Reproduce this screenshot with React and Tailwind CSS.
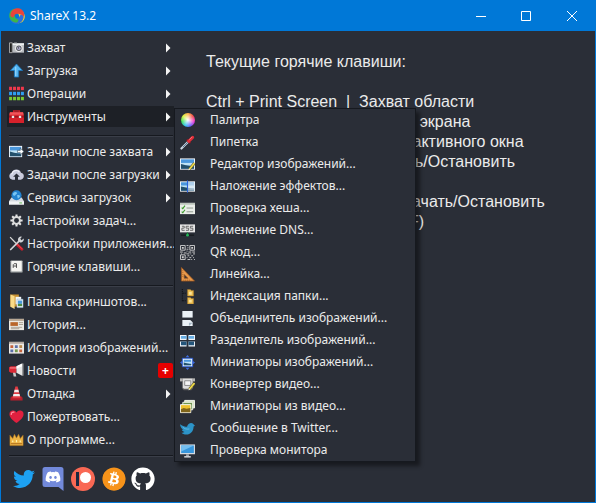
import React from "react";
import { FaTwitter, FaDiscord, FaBitcoin, FaGithub } from "react-icons/fa";

// 16x16 icon canvas shared by all menu icons
const Icon = ({ children }) => (
  <svg
    viewBox="0 0 16 16"
    className="h-[15px] w-[15px] shrink-0"
    fill="none"
    aria-hidden="true">
    {children}
  </svg>
);

// Small landscape picture reused in several icons
const Photo = ({ x = 0, y = 0, w = 16, h = 11 }) => (
  <g>
    <rect x={x} y={y} width={w} height={h} fill="#f4f8fb" />
    <rect x={x + 1} y={y + 1} width={w - 2} height={h - 2} fill="#4a97dc" />
    <path
      d={`M${x + 1} ${y + h * 0.4}h${w - 2}v${h * 0.25}h-${w - 2}z`}
      fill="#bfe3f5"
    />
    <path
      d={`M${x + 1} ${y + h * 0.5}L${x + w * 0.4} ${y + h * 0.6}L${x + w - 1} ${
        y + h * 0.72
      }V${y + h - 1}H${x + 1}z`}
      fill="#23506b"
    />
  </g>
);

const Pencil = () => (
  <g>
    <path d="M15.5 6.5L10 13" stroke="#5c5424" strokeWidth="3" />
    <path d="M15.5 6.5L10 13" stroke="#f0dc4c" strokeWidth="1.8" />
    <path d="M9 14.2l.6-2 1.4 1.2z" fill="#f5f5e8" />
  </g>
);

const CameraIcon = () => (
  <Icon>
    <path d="M.5 3h3v10.500h-3z" fill="#222" stroke="#c8c8c8" strokeWidth=".8" />
    <path d="M4 3.500h12v10H4z" fill="#b9bcc0" />
    <path d="M4 3.500h12v2H4z" fill="#eceef0" />
    <path d="M5.500 2.500h3v1h-3z" fill="#85888c" />
    <circle cx="10.5" cy="8.7" r="4" fill="#ececee" />
    <circle cx="10.5" cy="8.7" r="2.9" fill="#55595f" />
    <circle cx="10.5" cy="8.7" r="1.9" fill="#b4b1d2" />
    <circle cx="10.2" cy="8.4" r=".7" fill="#333" />
  </Icon>
);

const UploadIcon = () => (
  <Icon>
    <path
      d="M8 1L14.5 8H10.3v7H5.700V8H1.500z"
      fill="#51b3f0"
      stroke="#1976bd"
      strokeWidth=".8"
    />
    <path d="M7.2 4v10" stroke="#a4dcff" strokeWidth="1" />
  </Icon>
);

const GridIcon = () => (
  <Icon>
    {[
      [0.8, "#f0384c"],
      [6.2, "#2f9df0"],
      [11.6, "#78c832"],
    ].map(([y, color]) =>
      [0.1, 4.3, 8.5, 12.7].map((x) => (
        <rect key={`${x}-${y}`} x={x} y={y} width="3.200" height="3.600" fill={color} />
      ))
    )}
  </Icon>
);

const ToolboxIcon = () => (
  <Icon>
    <path d="M5 4V2h6v2" stroke="#c81e28" strokeWidth="1.6" />
    <path d="M1 3.500h14L16 8v7H0V8z" fill="#d6212b" />
    <path d="M1 3.500h14l.6 2.500H.4z" fill="#f2545a" />
    <path d="M0 8.4h16" stroke="#771018" />
    <path d="M3 7.3h2.500v2.4H3zM10.5 7.3H13v2.4h-2.500z" fill="#e8e8e8" />
  </Icon>
);

const AfterCaptureIcon = () => (
  <Icon>
    <Photo y={2} w={14} h={12} />
    <path
      d="M9 6.800h3V4.5L16 8l-4 3.5V9.2H9z"
      fill="#fff"
      stroke="#274254"
      strokeWidth=".6"
    />
  </Icon>
);

const CloudIcon = () => (
  <Icon>
    <path
      d="M3.800 13.5a3.800 3.800 0 01-.8-7.400A5.200 5.200 0 0112.8 6a3.8 3.8 0 01-.4 7.500z"
      fill="#c9cbdd"
    />
    <path d="M3 8a4.500 4.500 0 018-2.500" stroke="#f1f1f8" strokeWidth="1.2" />
    <path d="M8 6.8l3.600 3.700H9.6V14H6.4v-3.500h-2z" fill="#292c36" />
  </Icon>
);

const DriveGlobeIcon = () => (
  <Icon>
    <path d="M2.5 8h11l2.500 4v3.500H0V12z" fill="#d5dae1" />
    <path d="M0 12.2h16v3.300H0z" fill="#f1f3f6" />
    <path d="M11 13.8h3" stroke="#58b04a" />
    <circle cx="8" cy="5.6" r="5.400" fill="#2382cf" />
    <path
      d="M4.2 3.6c2-2 3.8-1.6 4.3-.6s-1 1.6-1.8 2.6-2 .6-2.5-.2zM8.6 5.5c1.6-.4 3 .2 3.2 1.2-.6 1.4-1.6 2-2.4 2.4z"
      fill="#78c4f2"
    />
  </Icon>
);

const GearIcon = () => (
  <Icon>
    <path
      d="M8 1.5v13M1.5 8h13M3.4 3.4l9.2 9.2M12.6 3.4l-9.2 9.2"
      stroke="#e6e6e6"
      strokeWidth="2.2"
    />
    <circle cx="8" cy="8" r="4.7" fill="#dcdcdc" />
    <circle cx="8" cy="8" r="2.6" fill="#292e37" />
  </Icon>
);

const ToolsIcon = () => (
  <Icon>
    <path d="M1.2 1.2l7 7.3" stroke="#d8d8d8" strokeWidth="1.3" />
    <path d="M8.4 8.8l5.4 5.4" stroke="#c81f2b" strokeWidth="3" strokeLinecap="round" />
    <path d="M8.8 8.6l5 5" stroke="#f05c60" strokeWidth=".8" />
    <path d="M1.8 14.4L11 5.2" stroke="#d3d5d8" strokeWidth="1.8" strokeLinecap="round" />
    <path
      d="M13.8.8a3.2 3.2 0 00-4 4.2l1.6 1.6a3.2 3.2 0 004.2-4L13.4 4.600 12 3z"
      fill="#d3d5d8"
    />
  </Icon>
);

const KeyIcon = () => (
  <Icon>
    <rect x="1.5" y="1.500" width="13" height="13" rx="1" fill="#a9adae" />
    <rect x="2.500" y="2" width="11" height="11" rx=".8" fill="#f5f5f2" />
    <path d="M4.500 9.500V6L5.500 5h2.500V9.500M4.500 7.500H8" stroke="#4c4c4c" strokeWidth="1" />
  </Icon>
);

const FolderPicturesIcon = () => (
  <Icon>
    <path d="M1.500.500h9v13h-9z" fill="#c89132" />
    <path d="M1.500.500L6 2.500v13.500L1.500 13.500z" fill="#fadb87" />
    <path d="M7 3h6v8H7z" fill="#f4f7fa" />
    <path d="M8.500 5.500H15v9H8.500z" fill="#f4f7fa" stroke="#7da6c4" strokeWidth=".5" />
    <path d="M9.500 7H14v3.500H9.500z" fill="#4a9add" />
    <path d="M9.500 10.500H14V13H9.500z" fill="#4c8a42" />
  </Icon>
);

const HistoryIcon = () => (
  <Icon>
    <path d="M0 2h16v12H0z" fill="#ece9e2" />
    <path d="M0 2h16v2.200H0z" fill="#b9a894" />
    <path d="M1.500 5.500h8v4h-8z" fill="#b9662a" />
    <path d="M10.500 6H15M10.500 8H15M2 11h12M2 12.500h9" stroke="#96897a" strokeWidth=".8" />
  </Icon>
);

const ImageHistoryIcon = () => (
  <Icon>
    <path d="M0 2h16v12.500H0z" fill="#ece9e6" />
    <path d="M0 2h16v2H0z" fill="#b5a9a0" />
    <path d="M1.500 5.500h3v3h-3zM11 10h3v3h-3z" fill="#c4623c" />
    <path d="M6.300 5.500h3v3h-3zM1.500 10h3v3h-3z" fill="#5b6fa8" />
    <path d="M11 5.500h3v3h-3z" fill="#b8884a" />
    <path d="M6.300 10h3v3h-3z" fill="#73974e" />
  </Icon>
);

const MegaphoneIcon = () => (
  <Icon>
    <path d="M4 9l1 5.500h2.800L6.600 9z" fill="#c9c9c9" />
    <path d="M0 4.500L2 3.500h6v7H2L0 9z" fill="#dc2936" />
    <path d="M1 4.500h7v1.500H1z" fill="#f4747c" />
    <path d="M8 3.500L14 .500v13L8 10.500z" fill="#e6e6e6" />
    <path d="M8 3.500L14 .500v3L8 6z" fill="#fff" />
    <path d="M14.700.500v13" stroke="#a3a3a3" strokeWidth="1.500" />
  </Icon>
);

const ConeIcon = () => (
  <Icon>
    <path d="M1.500 12.500L3 11h10l1.500 1.500V15.500h-13z" fill="#b51f2c" />
    <path d="M6.800.500h2.400L12.500 13h-9z" fill="#e13a42" />
    <path d="M6 4h4l.7 2.600H5.300zM4.800 8.600h6.400l.6 2.400H4.200z" fill="#f3f0ee" />
  </Icon>
);

const HeartIcon = () => (
  <Icon>
    <path
      d="M8 15C3.500 11.600.5 9 .5 5.600A4 4 0 018 3.600a4 4 0 017.500 2C15.500 9 12.500 11.600 8 15z"
      fill="#e0203f"
    />
    <path d="M2.400 5.800c0-1.800 1.400-2.600 2.800-2.400" stroke="#ff8fa0" strokeWidth="1.300" strokeLinecap="round" />
  </Icon>
);

const CrownIcon = () => (
  <Icon>
    <path
      d="M1 3.500L4 7l1.800-4.500L8 6.500l2.200-4L12 7l3-3.500V14.500H1z"
      fill="#eeb546"
      stroke="#b87a1c"
      strokeWidth=".6"
    />
    <path d="M2 12.500h12" stroke="#a9661a" />
    <path d="M4 9v2M8 8.500V11M12 9v2" stroke="#fff0ae" strokeWidth="1.300" />
  </Icon>
);

const PipetteIcon = () => (
  <Icon>
    <path d="M1.500 14.500L9 7" stroke="#cdd8e3" strokeWidth="2.200" strokeLinecap="round" />
    <path d="M3 13l5.500-5.500" stroke="#51718e" strokeWidth="1" />
    <path d="M7.300 5l3.700 3.700" stroke="#9c1622" strokeWidth="1.800" />
    <path d="M9.300 6.700L13.500 2.500" stroke="#e32d37" strokeWidth="3.200" strokeLinecap="round" />
    <path d="M10 5l3-3" stroke="#ff8c8c" strokeWidth=".8" />
  </Icon>
);

const EditorIcon = () => (
  <Icon>
    <Photo y={1.5} h={12} />
    <Pencil />
  </Icon>
);

const EffectsIcon = () => (
  <Icon>
    <Photo y={2.5} h={11} />
    <path d="M8 3.500h7v9H8z" fill="#e7edf2" opacity=".65" />
    <path d="M8 1.500v13" stroke="#2b62d9" strokeWidth="1.200" />
  </Icon>
);

const HashIcon = () => (
  <Icon>
    <path d="M0 2h16v12H0z" fill="#e9ede8" />
    <path d="M0 2h16v2H0z" fill="#bcc4bc" />
    <path d="M1.800 7l1.200 1.200L5.300 5M1.800 11.300L3 12.500l2.300-3.200" stroke="#3b9a2c" strokeWidth="1.200" />
    <path d="M7 7.500h7M7 11.500h7" stroke="#8a948a" />
  </Icon>
);

const DnsIcon = () => (
  <Icon>
    <path d="M0 1.500h16v8.500H0z" fill="#e6e6e6" />
    <path
      d="M2 3.500h2.500v2H2v2.300h3M9.500 3.500h-3v2h2.700v2.300H6.300M14 3.500h-3v2h2.700v2.300h-3"
      stroke="#555"
      strokeWidth=".9"
    />
    <path d="M1 13h14" stroke="#14181c" strokeWidth="1.200" />
    <path d="M8 10v3" stroke="#188c3c" strokeWidth="1.200" />
    <circle cx="8" cy="13" r="1.500" fill="#25b658" />
  </Icon>
);

const QrIcon = () => (
  <Icon>
    <g stroke="#d0d0d0">
      <path d="M.500.500h5v5h-5zM10.500.500h5v5h-5zM.500 10.500h5v5h-5z" />
      <path d="M2 3h2M12 3h2M2 13h2" strokeWidth="2" />
      <path d="M7 .500h2M8 2.500h1M7 4.500h2M7 6.500h1M0 7.500h3M4 8.500h3M9 7.500h3M13 7.500h3M1 9.500h1M7 9.500h3M11 9.500h1M14 9.500h2M8 11.500h2M12 11.500h2M7 13.500h1M10 13.500h2M14 13.500h1M8 15.500h3M12 15.500h1M15 15.500h1" />
    </g>
  </Icon>
);

const RulerIcon = () => (
  <Icon>
    <path
      d="M1.500.500L15.500 15h-14zM4.500 8v4h4z"
      fill="#e89a4c"
      fillRule="evenodd"
      stroke="#9c5720"
      strokeWidth=".8"
    />
    <path d="M2.500 4h1M2.500 6h1M2.500 8h1M2.500 10h1M4 13.500v1M6 13.500v1M8 13.500v1M10 13.500v1" stroke="#7a4014" strokeWidth=".6" />
  </Icon>
);

const IndexIcon = () => (
  <Icon>
    <path d="M2.500 0v13M3 4.500h4M3 12.500h4" stroke="#090b0e" strokeDasharray="1 1" />
    <path d="M8 .500h3l1 1h2.500v6H8zM8 9h3l1 1h2.500v6H8z" fill="#e9b94b" stroke="#a8782a" strokeWidth=".5" />
    <path d="M9.500 3h3v3h-3zM9.500 11.500h3v3h-3z" fill="#fbe49a" />
  </Icon>
);

const CombinerIcon = () => (
  <Icon>
    <path d="M2.500 0h11v7h-11z" fill="#eaf1f6" />
    <path d="M2.500 9.500H11l2.500 2.500V16h-11z" fill="#eaf1f6" />
    <path d="M9.500 16v-3.500h4z" fill="#a3b5c2" />
  </Icon>
);

// One picture cut into four tiles
const SplitterIcon = () => (
  <Icon>
    <path d="M0 2h7v5.500H0zM9 2h7v5.500H9zM0 9h7v5.500H0zM9 9h7v5.500H9z" fill="#f1f6fb" />
    <path d="M1 3.200h6v2.800H1zM9 3.200h6v2.800H9z" fill="#68aee4" />
    <path d="M1 9h6v4H1zM9 9h6v4H9z" fill="#24557a" />
  </Icon>
);

const ThumbnailIcon = () => (
  <Icon>
    <path d="M8 0l2 2.500H6zM8 16l2-2.500H6zM0 8l2.500-2v4zM16 8l-2.500-2v4z" fill="#3b6be0" />
    <path d="M2 3h12v10H2z" fill="#2453c4" />
    <Photo x={3} y={4} w={10} h={8} />
  </Icon>
);

const VideoConverterIcon = () => (
  <Icon>
    <path d="M0 1h16v4h-2v7l-2 2H4l-2-2V5H0z" fill="#5a5a5a" />
    <path d="M3 1.500h10.500v9.500L12 12.500H4L3 11z" fill="#dedede" />
    <path d="M0 1.500h3v3H0zM13.500 1.500H16v3h-2.500z" fill="#b4b4b4" />
    <path d="M5 4h6.500v5H5z" stroke="#888" fill="#f4f4f4" />
    <Pencil />
  </Icon>
);

const VideoThumbnailIcon = () => (
  <Icon>
    <path d="M5 1.500h10.500v8H5z" fill="#d8e4c4" stroke="#f4f8ef" />
    <path d="M3 3.500h10.500v8H3z" fill="#6e9550" stroke="#f4f8ef" />
    <path d="M.500 6h11v8.500H.500z" fill="#eec22f" stroke="#fafcf4" />
    <path d="M1 11l3-1.500 3 1 4-1V14H1z" fill="#80651a" />
  </Icon>
);

const TweetIcon = () => (
  <Icon>
    <path
      d="M0 3.500C3 6 5.500 6 7.500 6.200 8 3.500 10 2 12 2c1.300 0 2.300.8 2.600 1.800L16 5l-1.500.8c0 5-3.300 8.700-7.800 8.700-2.200 0-4-.8-5.200-2 1.500 0 2.500-.3 3.300-.8C3 11.200 2.300 10.200 2 9.300h1.500C1.500 8 .3 6 0 3.500z"
      fill="#2c94c8"
    />
    <path d="M3 6.500c2 2 4 2.500 7 2" stroke="#70c4ea" strokeWidth=".8" />
  </Icon>
);

const MonitorIcon = () => (
  <Icon>
    <path d="M0 1.500h16v10.500H0z" fill="#d4dae0" />
    <path d="M1.200 2.700h13.600v8H1.200z" fill="#3796dc" />
    <path d="M1.200 2.700h13.600L1.200 9z" fill="#74bff0" />
    <path d="M6.500 12h3v2h-3z" fill="#a3a9b0" />
    <path d="M4.500 14h7v1.500h-7z" fill="#dde1e5" />
  </Icon>
);

// Colour wheel drawn with a conic gradient
const PaletteIcon = () => (
  <span className="flex h-[15px] w-[15px] shrink-0 items-center justify-center">
    <span className="h-3.5 w-3.5 rounded-full bg-[radial-gradient(circle,#fff_0%,#ffffff00_65%),conic-gradient(#ffb04a,#f04848,#f23ccf,#6a5cff,#35c4f2,#3fe05a,#d8f23e,#ffb04a)]" />
  </span>
);

// Four identical petals turned around the centre
const petal =
  "M1.500 6C2.500 2 6-.2 9.500.300C13.800 1 16 4.500 14.800 8.800C13.200 6.300 10.500 5.500 8.500 5.700C6.200 6 5 7 4.500 9.500C2 9.500 1 8 1.500 6z";

const Logo = () => (
  <svg viewBox="0 0 16 16" className="h-4 w-4" aria-hidden="true">
    <path d={petal} fill="#f2cf2a" transform="rotate(90 8 8)" />
    <path d={petal} fill="#2b6fe0" transform="rotate(180 8 8)" />
    <path d={petal} fill="#3fb549" transform="rotate(270 8 8)" />
    <path d={petal} fill="#e8443c" />
  </svg>
);

const menuGroups = [
  [
    { label: "Захват", icon: CameraIcon, arrow: true },
    { label: "Загрузка", icon: UploadIcon, arrow: true },
    { label: "Операции", icon: GridIcon, arrow: true },
    { label: "Инструменты", icon: ToolboxIcon, arrow: true, open: true },
  ],
  [
    { label: "Задачи после захвата", icon: AfterCaptureIcon, arrow: true },
    { label: "Задачи после загрузки", icon: CloudIcon, arrow: true },
    { label: "Сервисы загрузок", icon: DriveGlobeIcon, arrow: true },
    { label: "Настройки задач...", icon: GearIcon },
    { label: "Настройки приложения...", icon: ToolsIcon },
    { label: "Горячие клавиши...", icon: KeyIcon },
  ],
  [
    { label: "Папка скриншотов...", icon: FolderPicturesIcon },
    { label: "История...", icon: HistoryIcon },
    { label: "История изображений...", icon: ImageHistoryIcon },
    { label: "Новости", icon: MegaphoneIcon, badge: "+" },
    { label: "Отладка", icon: ConeIcon, arrow: true },
    { label: "Пожертвовать...", icon: HeartIcon },
    { label: "О программе...", icon: CrownIcon },
  ],
];

const tools = [
  { label: "Палитра", icon: PaletteIcon },
  { label: "Пипетка", icon: PipetteIcon },
  { label: "Редактор изображений...", icon: EditorIcon },
  { label: "Наложение эффектов...", icon: EffectsIcon },
  { label: "Проверка хеша...", icon: HashIcon },
  { label: "Изменение DNS...", icon: DnsIcon },
  { label: "QR код...", icon: QrIcon },
  { label: "Линейка...", icon: RulerIcon },
  { label: "Индексация папки...", icon: IndexIcon },
  { label: "Объединитель изображений...", icon: CombinerIcon },
  { label: "Разделитель изображений...", icon: SplitterIcon },
  { label: "Миниатюры изображений...", icon: ThumbnailIcon },
  { label: "Конвертер видео...", icon: VideoConverterIcon },
  { label: "Миниатюры из видео...", icon: VideoThumbnailIcon },
  { label: "Сообщение в Twitter...", icon: TweetIcon },
  { label: "Проверка монитора", icon: MonitorIcon },
];

const hotkeys = [
  "Ctrl + Print Screen  |  Захват области",
  "Print Screen  |   Захват всего экрана",
  "Alt + Print Screen  |   Захват активного окна",
  "Shift + Print Screen  |   Начать/Остановить",
  "запись экрана",
  "Ctrl + Shift + Print Screen | Начать/Остановить",
  "запись экрана (формата GIF)",
];

function TitleBar() {
  return (
    <header className="flex h-[31px] items-center bg-[#0078d7] pl-2 text-white">
      <Logo />
      <h1 className="ml-[5px] text-xs">ShareX 13.2</h1>
      <div className="ml-auto flex h-full">
        <button aria-label="Свернуть" className="flex w-[45px] items-center justify-center">
          <svg viewBox="0 0 10 10" className="h-2.5 w-2.5" stroke="white">
            <path d="M0 5.500h10" />
          </svg>
        </button>
        <button aria-label="Развернуть" className="flex w-[46px] items-center justify-center">
          <svg viewBox="0 0 10 10" className="h-2.5 w-2.5" stroke="white" fill="none">
            <path d="M.500.500h9v9h-9z" />
          </svg>
        </button>
        <button aria-label="Закрыть" className="flex w-[46px] items-center justify-center">
          <svg viewBox="0 0 10 10" className="h-2.5 w-2.5" stroke="white">
            <path d="M0 0l10 10M10 0L0 10" />
          </svg>
        </button>
      </div>
    </header>
  );
}

function ToolsMenu() {
  return (
    <ul className="absolute top-[3px] left-full z-10 w-[242px] border border-[#16191f] bg-[#2a2e37] shadow-[4px_4px_4px_rgba(0,0,0,0.45)]">
      {tools.map(({ label, icon: ToolIcon }) => (
        <li key={label}>
          <button className="flex h-[22px] w-full items-center gap-[15px] pl-[5px] whitespace-nowrap">
            <ToolIcon />
            {label}
          </button>
        </li>
      ))}
    </ul>
  );
}

function MenuItem({ label, icon: ItemIcon, arrow, badge, open }) {
  return (
    <li className="relative flex h-[23px] items-center">
      <button
        className={`flex h-[21px] w-full items-center gap-[3px] pl-0.5 whitespace-nowrap ${
          open ? "bg-[#1d2026]" : ""
        }`}>
        <ItemIcon />
        {label}
        {arrow && (
          <svg viewBox="0 0 5 10" className="mr-[3px] ml-auto h-2.5 w-[5px] shrink-0" fill="#f4f4f4">
            <path d="M0 .500l4.500 4.500L0 9.500z" />
          </svg>
        )}
        {badge && (
          <span className="mr-px ml-auto flex h-[15px] w-[15px] items-center justify-center rounded-xs bg-[#e60000] font-bold text-white">
            {badge}
          </span>
        )}
      </button>
      {open && <ToolsMenu />}
    </li>
  );
}

const Separator = () => (
  <hr className="mr-px ml-0.5 h-0.5 border-t border-b border-t-[#16191f] border-b-[#3a3e48]" />
);

function SocialLinks() {
  return (
    <div className="mt-2.5 flex items-center gap-[5px] pl-1.5">
      <a href="#twitter" aria-label="Twitter" className="mr-0.5">
        <FaTwitter className="h-[22px] w-[22px] text-[#1da1f2]" />
      </a>
      <a href="#discord" aria-label="Discord" className="relative mr-0.5">
        <svg viewBox="0 0 21 24" className="h-6 w-[22px]" fill="#7289da" aria-hidden="true">
          <path d="M2.500 0h16A2.500 2.500 0 0121 2.500V24l-5-4H2.500A2.500 2.500 0 010 17.500v-15A2.500 2.500 0 012.500 0z" />
        </svg>
        <FaDiscord className="absolute top-0.5 left-[3px] h-4 w-4 text-white" />
      </a>
      <a href="#patreon" aria-label="Patreon" className="mr-0.5">
        <svg viewBox="0 0 24 24" className="h-6 w-6" aria-hidden="true">
          <circle cx="12" cy="12" r="12" fill="#f96854" />
          <path d="M5 5h3v14H5z" fill="#1b2840" />
          <circle cx="14.500" cy="10.500" r="5.500" fill="#fff" />
        </svg>
      </a>
      <a href="#bitcoin" aria-label="Bitcoin">
        <FaBitcoin className="h-6 w-6 rounded-full bg-[radial-gradient(circle,#fff_60%,transparent_61%)] text-[#f7931a]" />
      </a>
      <a href="#github" aria-label="GitHub">
        <FaGithub className="h-6 w-6 text-white" />
      </a>
    </div>
  );
}

function App() {
  return (
    <div className="flex min-h-screen flex-col border-r border-b border-l border-[#0078d7] bg-[#2a2e37] font-['Noto_Sans','Open_Sans',sans-serif] text-xs text-[#ebebeb]">
      <TitleBar />
      <div className="flex flex-1">
        <nav className="w-[173px] shrink-0 pt-[5px] pl-1.5">
          {menuGroups.map((group, index) => (
            <React.Fragment key={index}>
              <ul className={index > 0 ? "pt-[3px]" : ""}>
                {group.map((item) => (
                  <MenuItem key={item.label} {...item} />
                ))}
              </ul>
              <div className={index < 2 ? "pt-[7px]" : "pt-1"}>
                <Separator />
              </div>
            </React.Fragment>
          ))}
          <SocialLinks />
        </nav>
        <main className="min-w-0 flex-1 pt-[21px] pl-8 font-['Liberation_Sans',Arial,sans-serif] text-base leading-5">
          <h2 className="mb-5">Текущие горячие клавиши:</h2>
          {hotkeys.map((line) => (
            <p key={line} className="whitespace-pre">
              {line}
            </p>
          ))}
        </main>
      </div>
    </div>
  );
}

export default App;
